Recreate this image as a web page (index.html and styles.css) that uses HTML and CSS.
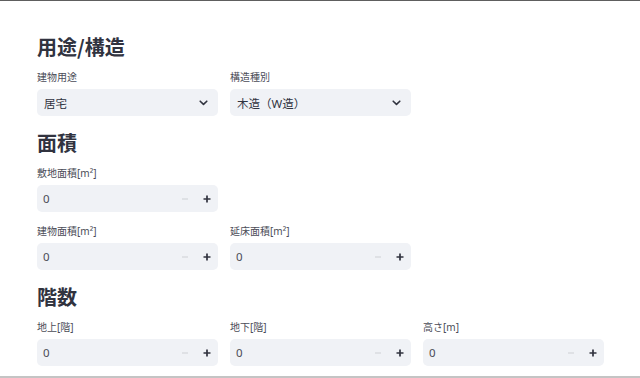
FILE: index.html
```html
<!DOCTYPE html>
<html lang="ja">
<head>
    <meta charset="UTF-8">
    <meta name="viewport" content="width=device-width, initial-scale=1.0">
    <title>建物情報</title>
    <link rel="stylesheet" href="styles.css">
</head>
<body>
    <div class="page">
        <section class="section">
            <h2>用途/構造</h2>
            <div class="row">
                <div class="field">
                    <label>建物用途</label>
                    <div class="box select">
                        <span>居宅</span>
                        <svg class="chev" width="9" height="6" viewBox="0 0 9 6"><path d="M1.2 1.2 L4.5 4.4 L7.8 1.2" fill="none" stroke="#31333f" stroke-width="1.6" stroke-linecap="round" stroke-linejoin="round"/></svg>
                    </div>
                </div>
                <div class="field">
                    <label>構造種別</label>
                    <div class="box select">
                        <span>木造（W造）</span>
                        <svg class="chev" width="9" height="6" viewBox="0 0 9 6"><path d="M1.2 1.2 L4.5 4.4 L7.8 1.2" fill="none" stroke="#31333f" stroke-width="1.6" stroke-linecap="round" stroke-linejoin="round"/></svg>
                    </div>
                </div>
            </div>
        </section>

        <section class="section">
            <h2>面積</h2>
            <div class="row">
                <div class="field">
                    <label>敷地面積[m²]</label>
                    <div class="box number">
                        <span class="value">0</span>
                        <svg class="step" width="22" height="10" viewBox="0 0 22 10"><path d="M8 5 H14" stroke="#d3d5db" stroke-width="1.2"/></svg>
                        <svg class="step" width="22" height="10" viewBox="0 0 22 10"><path d="M7.5 5 H14.5 M11 1.5 V8.5" stroke="#31333f" stroke-width="1.7"/></svg>
                    </div>
                </div>
            </div>
            <div class="row">
                <div class="field">
                    <label>建物面積[m²]</label>
                    <div class="box number">
                        <span class="value">0</span>
                        <svg class="step" width="22" height="10" viewBox="0 0 22 10"><path d="M8 5 H14" stroke="#d3d5db" stroke-width="1.2"/></svg>
                        <svg class="step" width="22" height="10" viewBox="0 0 22 10"><path d="M7.5 5 H14.5 M11 1.5 V8.5" stroke="#31333f" stroke-width="1.7"/></svg>
                    </div>
                </div>
                <div class="field">
                    <label>延床面積[m²]</label>
                    <div class="box number">
                        <span class="value">0</span>
                        <svg class="step" width="22" height="10" viewBox="0 0 22 10"><path d="M8 5 H14" stroke="#d3d5db" stroke-width="1.2"/></svg>
                        <svg class="step" width="22" height="10" viewBox="0 0 22 10"><path d="M7.5 5 H14.5 M11 1.5 V8.5" stroke="#31333f" stroke-width="1.7"/></svg>
                    </div>
                </div>
            </div>
        </section>

        <section class="section">
            <h2>階数</h2>
            <div class="row">
                <div class="field">
                    <label>地上[階]</label>
                    <div class="box number">
                        <span class="value">0</span>
                        <svg class="step" width="22" height="10" viewBox="0 0 22 10"><path d="M8 5 H14" stroke="#d3d5db" stroke-width="1.2"/></svg>
                        <svg class="step" width="22" height="10" viewBox="0 0 22 10"><path d="M7.5 5 H14.5 M11 1.5 V8.5" stroke="#31333f" stroke-width="1.7"/></svg>
                    </div>
                </div>
                <div class="field">
                    <label>地下[階]</label>
                    <div class="box number">
                        <span class="value">0</span>
                        <svg class="step" width="22" height="10" viewBox="0 0 22 10"><path d="M8 5 H14" stroke="#d3d5db" stroke-width="1.2"/></svg>
                        <svg class="step" width="22" height="10" viewBox="0 0 22 10"><path d="M7.5 5 H14.5 M11 1.5 V8.5" stroke="#31333f" stroke-width="1.7"/></svg>
                    </div>
                </div>
                <div class="field">
                    <label>高さ[m]</label>
                    <div class="box number">
                        <span class="value">0</span>
                        <svg class="step" width="22" height="10" viewBox="0 0 22 10"><path d="M8 5 H14" stroke="#d3d5db" stroke-width="1.2"/></svg>
                        <svg class="step" width="22" height="10" viewBox="0 0 22 10"><path d="M7.5 5 H14.5 M11 1.5 V8.5" stroke="#31333f" stroke-width="1.7"/></svg>
                    </div>
                </div>
            </div>
        </section>
    </div>
</body>
</html>
```

FILE: styles.css
```css
body {
    margin: 0;
    font-family: "Noto Sans", "Noto Sans CJK JP", sans-serif;
    color: #31333f;
    background: #fff;
}
.page {
    box-sizing: border-box;
    height: 378px;
    border-top: 1px solid #5e5e5e;
    border-bottom: 2px solid #c4c4c4;
    padding: 34px 0 0 37px;
    overflow: hidden;
}
.section {
    display: flex;
    flex-direction: column;
    gap: 12px;
    margin-bottom: 15px;
}
.section h2 {
    margin: 0 0 -1px 0;
    font-size: 20px;
    line-height: 24px;
    font-weight: 700;
    font-family: "Noto Sans CJK JP", sans-serif;
}
.row {
    display: grid;
    grid-template-columns: repeat(3, 181px);
    column-gap: 12px;
}
.field {
    display: flex;
    flex-direction: column;
    gap: 5px;
}
.field label {
    font-size: 10px;
    line-height: 14px;
    color: #4a4c57;
}
.box {
    height: 27px;
    background: #f0f2f6;
    border-radius: 5px;
    display: flex;
    align-items: center;
    font-size: 11.5px;
}
.select {
    padding: 0 10px 0 7px;
    justify-content: space-between;
}
.number {
    padding: 0 0 0 6px;
}
.value {
    flex: 1;
    color: #4a4c57;
}
.step {
    display: block;
}
```
